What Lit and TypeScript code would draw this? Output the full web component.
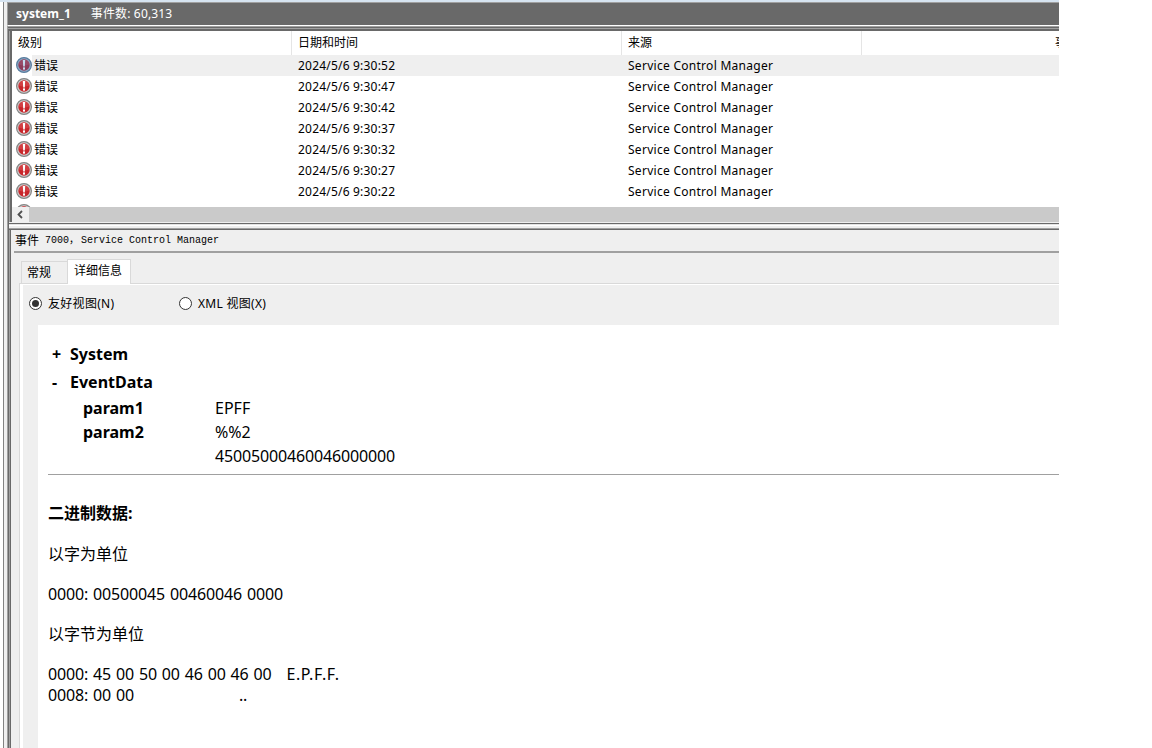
import { LitElement, css, html, svg } from 'lit'
import { customElement, property } from 'lit/decorators.js'

const times = ['9:30:52', '9:30:47', '9:30:42', '9:30:37', '9:30:32', '9:30:27', '9:30:22']

@customElement('error-icon')
export class ErrorIcon extends LitElement {
  @property({ type: Boolean }) selected = false

  static styles = css`
    :host {
      display: block;
      width: 16px;
      height: 16px;
    }
    svg {
      display: block;
    }
  `

  render() {
    const ring = this.selected ? '#587c9e' : '#858585'
    const light = this.selected ? '#8fabc6' : '#cfcfcf'
    const fill = this.selected ? '#8d3b5b' : '#c8262b'
    const glow = this.selected ? '#a7617c' : '#e0666a'
    const mark = this.selected ? '#c5dcf0' : '#ffffff'
    return html`
      <svg width="16" height="16" viewBox="0 0 16 16">
        ${svg`
          <circle cx="8" cy="8" r="7.4" fill=${light} stroke=${ring} stroke-width="1.2" />
          <circle cx="8" cy="8" r="5.7" fill=${fill} />
          <path d="M2.6 7.6a5.4 5.4 0 0 1 10.8 0Q8 9.5 2.6 7.6z" fill=${glow} opacity="0.4" />
          <path d="M6.8 3h2.4l-.4 6.4H7.2z" fill=${mark} />
          <rect x="7" y="10.4" width="2" height="2.2" fill=${mark} />
        `}
      </svg>
    `
  }
}

@customElement('event-row')
export class EventRow extends LitElement {
  @property() time = ''
  @property({ type: Boolean }) selected = false

  static styles = css`
    :host {
      display: block;
    }
    .row {
      display: grid;
      grid-template-columns: 18px 264px 330px 1fr;
      height: 21px;
      line-height: 21px;
      padding-left: 4px;
    }
    .selected {
      background: linear-gradient(to right, #fff 20px, #efefef 20px);
    }
    error-icon {
      margin-top: 2px;
    }
    .time {
      letter-spacing: 0.2px;
    }
    .source {
      letter-spacing: 0.28px;
    }
  `

  render() {
    return html`
      <div class="row ${this.selected ? 'selected' : ''}">
        <error-icon .selected=${this.selected}></error-icon>
        <span><slot></slot></span>
        <span class="time">2024/5/6 ${this.time}</span>
        <span class="source">Service Control Manager</span>
      </div>
    `
  }
}

@customElement('app-root')
export class AppRoot extends LitElement {
  static styles = css`
    :host {
      display: block;
      width: 1152px;
      height: 748px;
      overflow: hidden;
      background: #fff;
      color: #000;
      font: 12px 'Noto Sans', 'Noto Sans CJK SC', sans-serif;
    }
    .window {
      box-sizing: border-box;
      display: flex;
      width: 1059px;
      height: 748px;
      border-top: 2px solid #d6e4f1;
      background: #efefef;
      white-space: nowrap;
      overflow: hidden;
    }
    .tree {
      flex: none;
      width: 3px;
      margin-right: 3px;
      background: #fff;
      border-right: 1px solid #828282;
    }
    .main {
      flex: 1;
      min-width: 0;
      display: flex;
      flex-direction: column;
      background: linear-gradient(to right, #a0a0a0 1px, #696969 1px 2px, #efefef 2px);
    }
    .title {
      flex: none;
      display: flex;
      gap: 20px;
      height: 22px;
      line-height: 21px;
      padding-left: 8px;
      border: solid #a0a0a0;
      border-width: 1px 0 0 1px;
      border-bottom: 1px solid #fff;
      background: #696969;
      color: #fff;
    }
    .title span {
      letter-spacing: 0.15px;
    }
    .frame-top {
      flex: none;
      height: 5px;
      margin-left: 1px;
      background: linear-gradient(#a0a0a0 1px, #696969 1px 2px, #a0a0a0 2px 3px, #696969 3px);
    }
    .list {
      flex: none;
      height: 191px;
      margin-left: 2px;
      padding-left: 2px;
      border-left: 1px solid #a0a0a0;
      background: #696969;
      overflow: hidden;
    }
    .head {
      display: grid;
      grid-template-columns: 279px 329px 239px 1fr;
      gap: 1px;
      height: 24px;
      line-height: 23px;
      background: #e5e5e5;
    }
    .head span {
      padding-left: 6px;
      background: #fff;
      overflow: hidden;
    }
    .head .clip {
      padding-left: 193px;
    }
    .rows {
      height: 152px;
      background: #fff;
      overflow: hidden;
    }
    .next {
      padding: 2px 0 0 4px;
    }
    .scroll {
      height: 15px;
      background: linear-gradient(to right, #efefef 17px, #cacaca 17px);
    }
    .scroll svg {
      display: block;
    }
    .split {
      flex: none;
      height: 8px;
      margin-left: 2px;
      background: linear-gradient(#efefef 1px, #696969 1px 2px, #e3e3e3 2px 3px, #fff 3px 4px, #efefef 4px 6px, #a0a0a0 6px 7px, #696969 7px);
    }
    .detail {
      flex: 1;
      min-height: 0;
      display: flex;
      flex-direction: column;
      margin-left: 2px;
      padding-left: 1px;
      border-left: 1px solid #a0a0a0;
      box-shadow: inset 1px 0 #696969;
    }
    .caption {
      flex: none;
      display: flex;
      height: 21px;
      margin-left: 3px;
      padding-left: 1px;
      border-bottom: 2px solid #a0a0a0;
      line-height: 22px;
    }
    .mono {
      font: 10px/22px 'Liberation Mono', 'Noto Sans CJK SC', monospace;
      white-space: pre;
    }
    .comma {
      width: 12px;
    }
    .tabs {
      flex: none;
      display: flex;
      align-items: flex-end;
      height: 30px;
      padding-left: 10px;
    }
    .tab {
      box-sizing: border-box;
      width: 46px;
      height: 22px;
      line-height: 21px;
      padding-left: 5px;
      border: 1px solid #d9d9d9;
      border-bottom: 0;
      border-right: 0;
    }
    .tab.active {
      width: 64px;
      height: 25px;
      padding-left: 6px;
      line-height: 22px;
      border-right: 1px solid #d9d9d9;
      background: #fff;
      margin-bottom: -1px;
      z-index: 1;
    }
    .page {
      flex: 1;
      min-height: 0;
      display: flex;
      flex-direction: column;
      margin-left: 8px;
      border: solid #d9d9d9;
      border-width: 1px 0 0 1px;
      box-shadow: inset 3px 1px #fff;
    }
    .radios {
      box-sizing: border-box;
      flex: none;
      display: flex;
      height: 41px;
      padding: 0 0 3px 9px;
      align-items: center;
    }
    .radio {
      display: flex;
      align-items: center;
      width: 150px;
      gap: 6px;
      letter-spacing: 0.3px;
    }
    .doc {
      flex: 1;
      margin-left: 18px;
      padding: 16px 0 0 10px;
      background: #fff;
      font-size: 16px;
    }
    .node {
      display: grid;
      grid-template-columns: 18px 1fr;
      height: 28px;
      line-height: 26px;
      padding-left: 4px;
      font-weight: bold;
    }
    .params {
      margin-top: -1px;
    }
    .param {
      display: grid;
      grid-template-columns: 132px 1fr;
      height: 24px;
      line-height: 24px;
      padding-left: 35px;
    }
    .digits {
      letter-spacing: -0.15px;
      word-spacing: 0.9px;
    }
    .binary {
      margin-top: 6px;
      padding-top: 28px;
      border-top: 1px solid #a0a0a0;
    }
    .binary p {
      height: 21px;
      line-height: 21px;
      margin: 0 0 19px;
    }
    .binary .heading {
      margin-bottom: 20px;
    }
    .binary .tight {
      margin: 0;
    }
    .ascii {
      margin-left: 15px;
      letter-spacing: 0.6px;
    }
    .far {
      margin-left: 105px;
    }
  `

  radio(label: string, checked: boolean) {
    return html`
      <span class="radio">
        <svg width="13" height="13" viewBox="0 0 13 13">
          <circle cx="6.5" cy="6.5" r="6" fill="#fff" stroke="#333" />
          ${checked ? svg`<circle cx="6.5" cy="6.5" r="3.5" fill="#333" />` : ''}
        </svg>
        <span>${label}</span>
      </span>
    `
  }

  render() {
    return html`
      <div class="window">
        <div class="tree"></div>
        <div class="main">
          <div class="title"><b>system_1</b><span>事件数: 60,313</span></div>
          <div class="frame-top"></div>
          <div class="list">
            <div class="head">
              <span>级别</span><span>日期和时间</span><span>来源</span><span class="clip">事</span>
            </div>
            <div class="rows">
              ${times.map((t, i) => html`<event-row .time=${t} .selected=${i === 0}>错误</event-row>`)}
              <div class="next"><error-icon></error-icon></div>
            </div>
            <div class="scroll">
              <svg width="17" height="15" viewBox="0 0 17 15">
                <path d="M10 4L6.5 7.5L10 11" fill="none" stroke="#505050" stroke-width="1.8" />
              </svg>
            </div>
          </div>
          <div class="split"></div>
          <div class="detail">
            <div class="caption">
              <span>事件</span>
              <span class="mono"> 7000</span>
              <span class="mono comma">，</span>
              <span class="mono">Service Control Manager</span>
            </div>
            <div class="tabs">
              <span class="tab">常规</span>
              <span class="tab active">详细信息</span>
            </div>
            <div class="page">
              <div class="radios">${this.radio('友好视图(N)', true)}${this.radio('XML 视图(X)', false)}</div>
              <div class="doc">
                <div class="node"><span>+</span><span>System</span></div>
                <div class="node"><span>-</span><span>EventData</span></div>
                <div class="params">
                  <div class="param"><b>param1</b><span>EPFF</span></div>
                  <div class="param"><b>param2</b><span>%%2</span></div>
                  <div class="param"><b></b><span class="digits">45005000460046000000</span></div>
                </div>
                <div class="binary">
                  <p class="heading"><b>二进制数据:</b></p>
                  <p>以字为单位</p>
                  <p class="digits">0000: 00500045 00460046 0000</p>
                  <p>以字节为单位</p>
                  <p class="digits tight">0000: 45 00 50 00 46 00 46 00<span class="ascii">E.P.F.F.</span></p>
                  <p class="digits tight">0008: 00 00<span class="far">..</span></p>
                </div>
              </div>
            </div>
          </div>
        </div>
      </div>
    `
  }
}
